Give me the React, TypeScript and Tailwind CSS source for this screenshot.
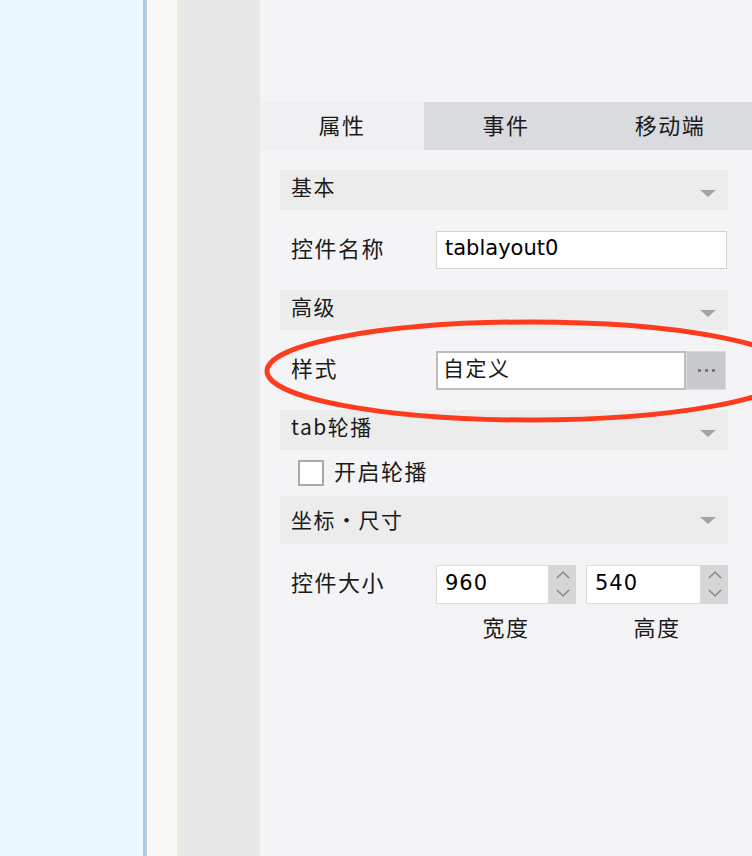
import React from "react";

const cjk = { fontFamily: '"Noto Sans CJK SC", "Noto Sans", sans-serif' };
const latin = { fontFamily: '"DejaVu Sans", "Noto Sans CJK SC", sans-serif' };

function Tri() {
  return (
    <svg width="16" height="7" viewBox="0 0 16 7" className="shrink-0">
      <path d="M0 0 H16 L8 7 Z" fill="#a3a3a3" />
    </svg>
  );
}

function Header({ title, h = 40, textTop = 1, triTop = 20 }: { title: string; h?: number; textTop?: number; triTop?: number }) {
  return (
    <div className="flex justify-between bg-[#ececec] pl-[11px] pr-[12px]" style={{ height: h }}>
      <div className="text-[21px] leading-[30px] tracking-[1.5px] text-[#1a1a1a]" style={{ ...cjk, paddingTop: textTop }}>
        {title}
      </div>
      <div style={{ paddingTop: triTop }}>
        <Tri />
      </div>
    </div>
  );
}

function Spinner() {
  return (
    <div className="flex h-[39px] w-[27px] flex-col items-center justify-center gap-[10px] bg-[#d6d6d8]">
      <svg width="14" height="8" viewBox="0 0 14 8">
        <path d="M1 7 L7 1 L13 7" stroke="#7a7a7a" strokeWidth="1.2" fill="none" />
      </svg>
      <svg width="14" height="8" viewBox="0 0 14 8">
        <path d="M1 1 L7 7 L13 1" stroke="#7a7a7a" strokeWidth="1.2" fill="none" />
      </svg>
    </div>
  );
}

const label = "w-[156px] pl-[11px] pb-[5px] text-[22px] tracking-[1.5px] text-[#1a1a1a]";

export default function App() {
  return (
    <div className="flex h-[856px] w-[752px] overflow-hidden">
      <div className="w-[143px] bg-[#e9f7fe]" />
      <div className="w-[2px] bg-[#a2c9f0]" />
      <div className="w-[2px] bg-[#cdc9c1]" />
      <div className="w-[30px] bg-[#f8f8f6]" />
      <div className="w-[3px] bg-[#eee9dc]" />
      <div className="w-[80px] bg-[#e8e8e8]" />
      <div className="relative flex w-[492px] flex-col bg-[#f4f4f6]">
        <div className="h-[102px]" />
        {/* tabs */}
        <div className="flex h-[48px]" style={cjk}>
          <div className="flex w-[164px] items-center justify-center bg-[#f0f0f2] pb-[4px] text-[22px] tracking-[1.5px] text-[#1a1a1a]">属性</div>
          <div className="flex w-[164px] items-center justify-center bg-[#dadbdf] pb-[4px] text-[22px] tracking-[1.5px] text-[#1a1a1a]">事件</div>
          <div className="flex w-[164px] items-center justify-center bg-[#dadbdf] pb-[4px] text-[22px] tracking-[1.5px] text-[#1a1a1a]">移动端</div>
        </div>

        <div className="flex flex-col pl-[20px] pr-[24px]">
          <div className="h-[20px]" />
          <Header title="基本" />
          <div className="h-[20px]" />
          {/* name row */}
          <div className="flex h-[39px] items-center">
            <div className={label} style={cjk}>控件名称</div>
            <div className="flex h-[38px] w-[291px] items-center border border-[#d4d4d4] bg-white pb-[1px] pl-[8px] text-[21px] text-black" style={latin}>
              tablayout0
            </div>
          </div>
          <div className="h-[21px]" />
          <Header title="高级" />
          <div className="h-[20px]" />
          {/* style row */}
          <div className="flex h-[40px] items-center">
            <div className={label} style={cjk}>样式</div>
            <div className="flex h-[39px] w-[250px] items-center border-2 border-[#bdbdbd] bg-white pb-[5px] pl-[5px] text-[21px] tracking-[1.5px] text-[#1a1a1a]" style={cjk}>
              自定义
            </div>
            <div className="flex h-[39px] w-[40px] items-center justify-center gap-[4px] border border-[#dadadc] bg-[#c9cacd]">
              <span className="h-[3px] w-[3px] bg-[#7a7a7a]" />
              <span className="h-[3px] w-[3px] bg-[#7a7a7a]" />
              <span className="h-[3px] w-[3px] bg-[#7a7a7a]" />
            </div>
          </div>
          <div className="h-[20px]" />
          <Header title="tab轮播" />
          {/* checkbox row */}
          <div className="flex h-[46px] items-center pl-[18px]">
            <div className="h-[26px] w-[26px] border-2 border-[#a9a9a9] bg-white" />
            <div className="pb-[6px] pl-[10px] text-[22px] tracking-[1.5px] text-[#1a1a1a]" style={cjk}>开启轮播</div>
          </div>
          <Header title="坐标・尺寸" h={48} textTop={8} triTop={21} />
          <div className="h-[20px]" />
          {/* size row */}
          <div className="flex h-[40px] items-center">
            <div className={label} style={cjk}>控件大小</div>
            <div className="flex h-[39px] w-[113px] items-center border border-[#dcdcdc] bg-white pl-[8px] text-[21px] tracking-[1px] text-black" style={latin}>960</div>
            <Spinner />
            <div className="w-[10px]" />
            <div className="flex h-[39px] w-[115px] items-center border border-[#dcdcdc] bg-white pl-[8px] text-[21px] tracking-[1px] text-black" style={latin}>540</div>
            <Spinner />
          </div>
          <div className="flex h-[52px] items-center pb-[8px]">
            <div className="w-[156px]" />
            <div className="w-[140px] text-center text-[22px] tracking-[1.5px] text-[#1a1a1a]" style={cjk}>宽度</div>
            <div className="w-[10px]" />
            <div className="w-[142px] text-center text-[22px] tracking-[1.5px] text-[#1a1a1a]" style={cjk}>高度</div>
          </div>
        </div>

        {/* red annotation ellipse */}
        <svg className="pointer-events-none absolute left-0 top-0" width="492" height="856" viewBox="0 0 492 856">
          <ellipse cx="270" cy="371" rx="263" ry="49" fill="none" stroke="#ff3b1d" strokeWidth="5" />
        </svg>
      </div>
    </div>
  );
}
